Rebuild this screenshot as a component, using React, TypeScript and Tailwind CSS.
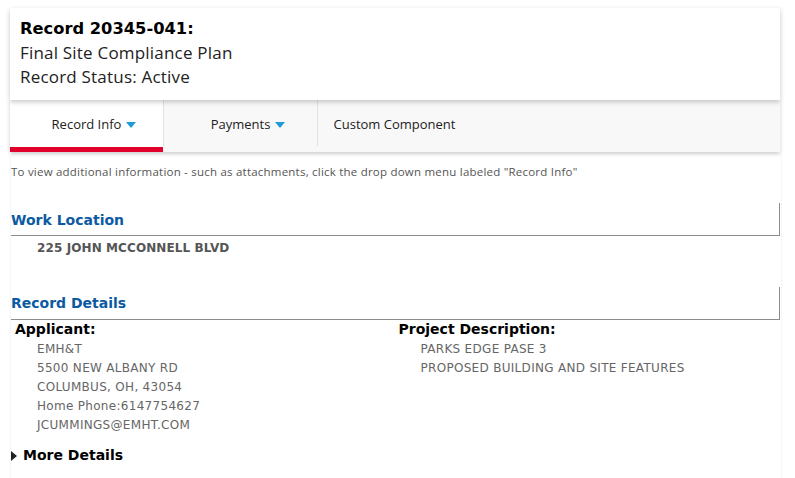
import React from "react";

const seg = { fontFamily: '"Open Sans", "Noto Sans", sans-serif' };
const ver = { fontFamily: '"DejaVu Sans", Verdana, sans-serif' };

function Caret() {
  return (
    <svg width="10" height="6" viewBox="0 0 10 6" className="ml-[5px] inline-block">
      <path d="M0 0 H10 L5 6 Z" fill="#1e9ad8" />
    </svg>
  );
}

export default function App() {
  return (
    <div className="w-[795px] h-[478px] bg-white overflow-hidden relative">
      <div className="pt-[8px] pl-[10px] w-[780px]">
        <div className="relative z-10 bg-white h-[92px] pl-[10px] pt-[9px] shadow-[0_2px_5px_rgba(0,0,0,0.22)]">
          <div className="text-[16.3px] leading-[24px] font-bold text-black" style={ver}>Record 20345-041:</div>
          <div className="text-[17px] leading-[24px] tracking-[0.2px] text-[#222]" style={seg}>Final Site Compliance Plan</div>
          <div className="text-[17px] leading-[24px] tracking-[0.2px] text-[#222]" style={seg}>Record Status: Active</div>
        </div>
        <div className="flex h-[52px] bg-[#f8f8f8] shadow-[0_2px_4px_rgba(0,0,0,0.2)]">
          <div className="relative w-[153px] bg-white flex items-center justify-center border-b-[5px] border-[#e0002a] pt-[3px]">
            <span className="text-[13px] text-[#222] relative" style={seg}>
              Record Info
              <span className="absolute left-full top-[7px] flex"><Caret /></span>
            </span>
          </div>
          <div className="w-[1px] h-[46px] bg-[#e2e2e2]" />
          <div className="relative w-[153px] flex items-center justify-center pb-[2px]">
            <span className="text-[13px] text-[#222] relative" style={seg}>
              Payments
              <span className="absolute left-full top-[7px] flex"><Caret /></span>
            </span>
          </div>
          <div className="w-[1px] h-[46px] bg-[#e2e2e2]" />
          <div className="relative w-[153px] flex items-center justify-center pb-[2px]">
            <span className="text-[13px] text-[#222]" style={seg}>Custom Component</span>
          </div>
        </div>
      </div>

      <div className="ml-[10px] w-[772px] border-x border-[#f6f6f6] h-[330px]">
        <div className="pt-[12px] text-[11.5px] leading-[16px] tracking-[0.22px] text-[#555]" style={seg}>
          To view additional information - such as attachments, click the drop down menu labeled "Record Info"
        </div>

        <div className="mt-[23px] w-[769px] h-[33px] border-r border-b border-[#8c8c8c] flex items-end pb-[4px]">
          <span className="text-[14px] font-bold text-[#0b5aa2]" style={ver}>Work Location</span>
        </div>
        <div className="pl-[26px] pt-[4px] text-[12px] leading-[16px] tracking-[0.1px] font-bold text-[#555]" style={ver}>
          225 JOHN MCCONNELL BLVD
        </div>

        <div className="mt-[31px] w-[769px] h-[33px] border-r border-b border-[#8c8c8c] flex items-end pb-[5px]">
          <span className="text-[14px] font-bold text-[#0b5aa2]" style={ver}>Record Details</span>
        </div>
        <div className="grid grid-cols-2 w-[769px] mt-[1px]">
          <div className="pl-[4px]">
            <div className="text-[14px] leading-[16px] font-bold text-black" style={ver}>Applicant:</div>
            <div className="pl-[22px] pt-[3px] text-[12px] leading-[19px] tracking-[0.3px] text-[#666]" style={ver}>
              <div>EMH&amp;T</div>
              <div>5500 NEW ALBANY RD</div>
              <div>COLUMBUS, OH, 43054</div>
              <div>Home Phone:6147754627</div>
              <div>JCUMMINGS@EMHT.COM</div>
            </div>
          </div>
          <div className="pl-[3px]">
            <div className="text-[14px] leading-[16px] font-bold text-black" style={ver}>Project Description:</div>
            <div className="pl-[22px] pt-[3px] text-[12px] leading-[19px] tracking-[0.3px] text-[#666]" style={ver}>
              <div>PARKS EDGE PASE 3</div>
              <div>PROPOSED BUILDING AND SITE FEATURES</div>
            </div>
          </div>
        </div>
        <div className="mt-[10px] flex items-center">
          <svg width="6" height="10" viewBox="0 0 6 10" className="mr-[6px]">
            <path d="M0 0 L6 5 L0 10 Z" fill="#222" />
          </svg>
          <span className="text-[14px] font-bold text-black" style={ver}>More Details</span>
        </div>
      </div>
    </div>
  );
}
